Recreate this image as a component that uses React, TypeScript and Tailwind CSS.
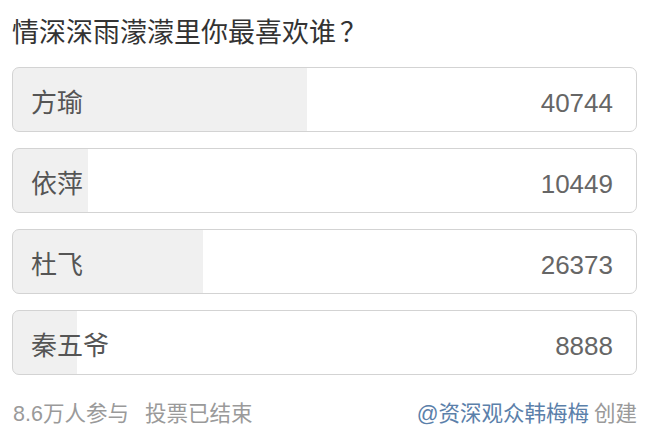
import React from "react";

const options = [
  { name: "方瑜", votes: 40744 },
  { name: "依萍", votes: 10449 },
  { name: "杜飞", votes: 26373 },
  { name: "秦五爷", votes: 8888 },
];

const total = options.reduce((s, o) => s + o.votes, 0);

export default function App() {
  return (
    <div
      className="w-[650px] h-[436px] bg-white pl-[12px] pr-[13px] overflow-hidden"
      style={{ fontFamily: '"Liberation Sans", "Noto Sans CJK SC", sans-serif' }}
    >
      <div
        className="mt-[13px] h-[36px] leading-[36px] text-[27px] text-[#333333]"
        style={{ fontFamily: '"Noto Sans CJK SC", sans-serif' }}
      >
        情深深雨濛濛里你最喜欢谁<span className="ml-[4px]">？</span>
      </div>
      <div className="mt-[18px] flex flex-col gap-[16px]">
        {options.map((o) => {
          const pct = (o.votes / total) * 100;
          return (
            <div
              key={o.name}
              className="h-[65px] rounded-[7px] border border-[#d3d3d3] flex items-center justify-between pl-[18px] pr-[23px] pt-[7px] text-[26px]"
              style={{
                background: `linear-gradient(to right, #f0f0f0 ${pct}%, #ffffff ${pct}%)`,
              }}
            >
              <span className="text-[#555555]">{o.name}</span>
              <span className="text-[#666666]">{o.votes}</span>
            </div>
          );
        })}
      </div>
      <div className="mt-[25px] h-[28px] leading-[28px] flex justify-between text-[21.5px]">
        <div className="text-[#9a9a9a] pl-[1px]">
          <span>8.6万人参与</span>
          <span className="ml-[16px]">投票已结束</span>
        </div>
        <div>
          <span className="text-[#5b80aa]">@资深观众韩梅梅</span>
          <span className="text-[#9a9a9a] ml-[5px]">创建</span>
        </div>
      </div>
    </div>
  );
}
